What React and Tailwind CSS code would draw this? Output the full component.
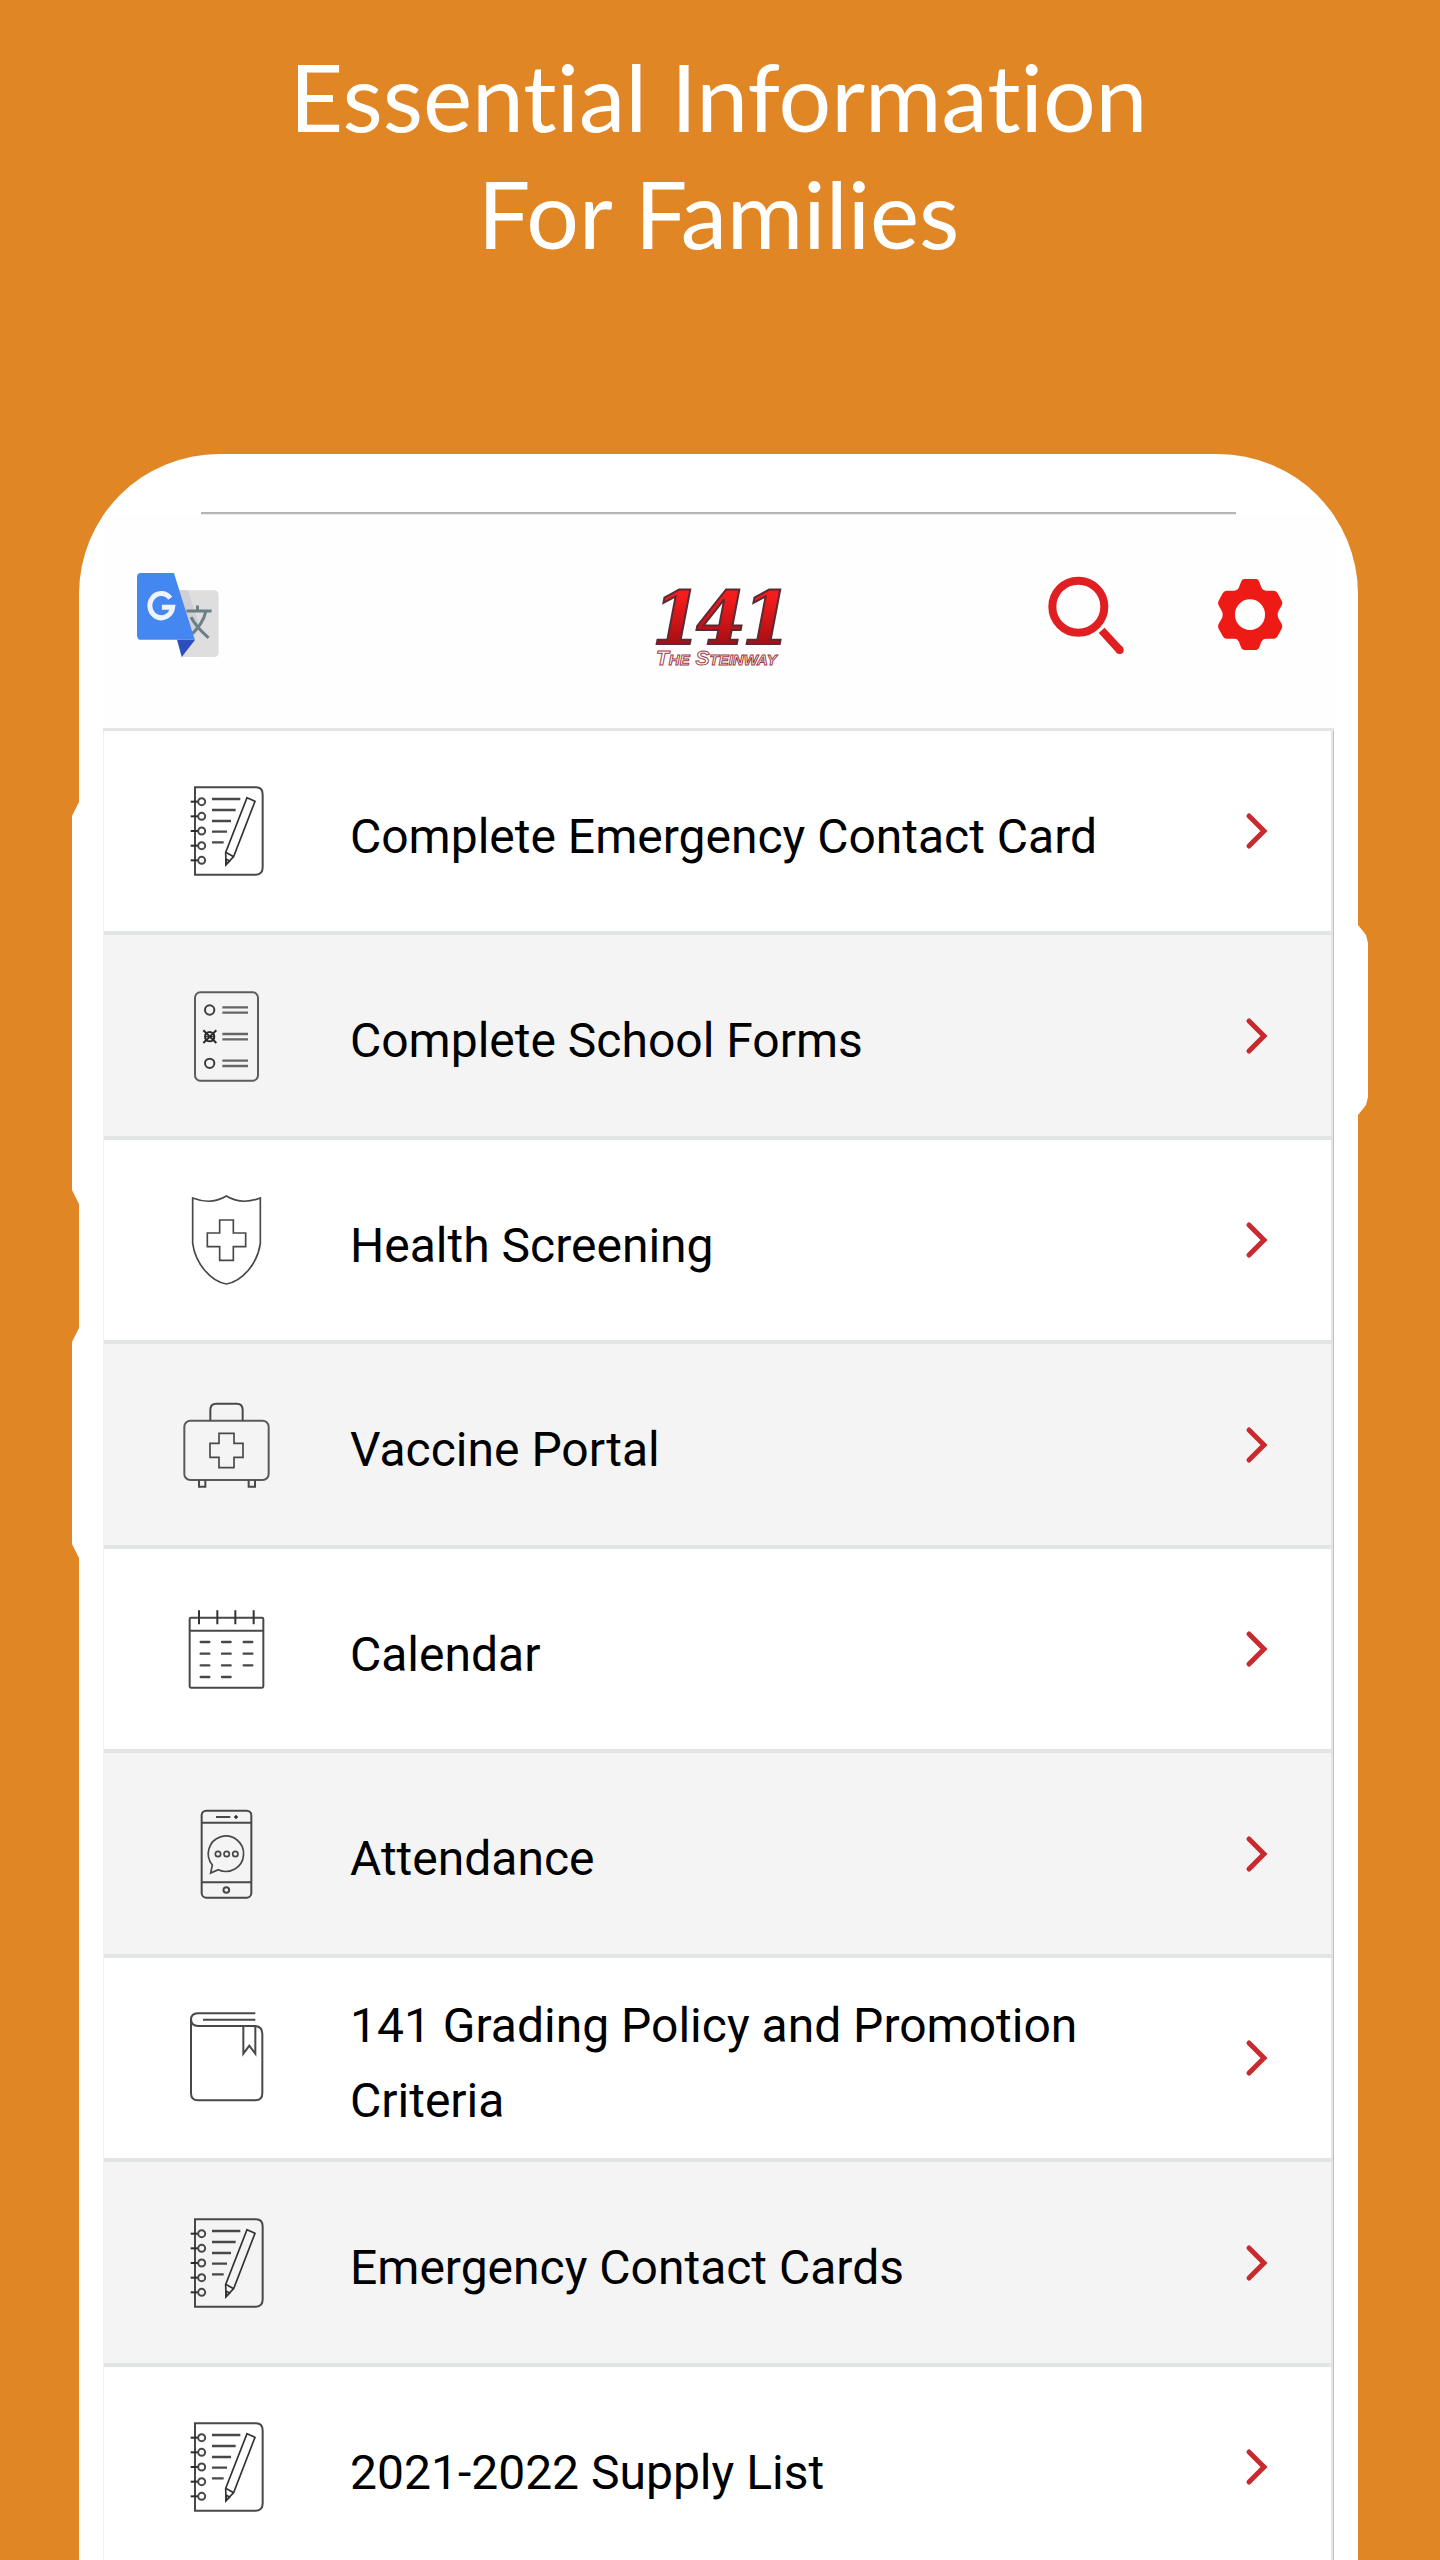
import React from "react";

function Icon({ viewBox, children }) {
  return (
    <svg
      viewBox={viewBox}
      className="h-[120px] w-[110px] shrink-0"
      fill="none"
      stroke="#484848"
      strokeWidth="6"
      aria-hidden="true"
    >
      {children}
    </svg>
  );
}

function NotebookIcon() {
  return (
    <Icon viewBox="0 3 330 360">
      <path d="M75 52H258Q278 52 278 74V292Q278 314 258 314H75Z" />
      {[95, 139, 183, 227, 271].map((y) => (
        <g key={y}>
          <path d={`M62 ${y}H84`} stroke="#2b2b2b" />
          <circle cx="95" cy={y} r="10.5" />
        </g>
      ))}
      <path d="M126 87H211M126 120H197M126 153H183M126 185H171M126 217H161" strokeWidth="7" />
      <path d="M231 83L255 94L191 260L168 284L167 247Z" stroke="#333" strokeWidth="5" />
      <path d="M167 247L191 260M168 284L169 268L179 273Z" stroke="#333" strokeWidth="5" />
    </Icon>
  );
}

function FormIcon() {
  return (
    <Icon viewBox="0 0 330 360">
      <rect x="75" y="49" width="189" height="265" rx="16" stroke="#5c5c5c" />
      <circle cx="119" cy="102" r="14" stroke="#3d3d3d" />
      <circle cx="119" cy="262" r="14" stroke="#3d3d3d" />
      <g stroke="#2b2b2b">
        <circle cx="119" cy="182" r="14" />
        <path d="M100 163L139 201M139 163L100 201" />
        <path d="M107 170V194M131 170V194M107 182H131" strokeWidth="3" />
      </g>
      <path
        d="M157 94H234M157 110H234M157 174H234M157 190H234M157 254H234M157 270H234"
        stroke="#666"
        strokeWidth="7"
      />
    </Icon>
  );
}

function ShieldIcon() {
  return (
    <Icon viewBox="0 0 330 360">
      <path d="M68 54Q124 76 169 48Q215 76 271 54V190C263 250 217 304 169 312C122 304 76 250 68 190Z" strokeWidth="5" />
      <path d="M149 120H190V159H227V200H190V241H149V200H112V159H149Z" strokeWidth="5" />
    </Icon>
  );
}

function FirstAidIcon() {
  return (
    <Icon viewBox="0 613 330 360">
      <rect x="43" y="720" width="253" height="178" rx="18" stroke="#5a5a5a" />
      <path d="M121 720V688Q121 669 139 669H200Q218 669 218 688V720" />
      <path d="M87 898V918H106V898M236 898V918H255V898" />
      <path d="M147 758H192V788H219V830H192V861H147V830H120V788H147Z" strokeWidth="5" />
    </Icon>
  );
}

function CalendarIcon() {
  return (
    <Icon viewBox="0 -3 330 360">
      <rect x="59" y="83" width="221" height="210" rx="4" />
      <path d="M59 122H280" />
      <path d="M87 61V103M142 61V103M196 61V103M251 61V103" stroke="#333" />
      <path
        d="M92 156H118M156 156H182M221 156H247M92 191H118M156 191H182M221 191H247M92 226H118M156 226H182M221 226H247M92 261H118M156 261H182"
        strokeWidth="7"
        strokeLinecap="round"
      />
    </Icon>
  );
}

function PhoneIcon() {
  return (
    <Icon viewBox="0 610 330 360">
      <rect x="95" y="660" width="149" height="261" rx="14" />
      <path d="M95 696H244M95 875H244M138 679H181" />
      <circle cx="198" cy="679" r="4" fill="#333" stroke="#333" strokeWidth="3" />
      <circle cx="169" cy="898" r="8.5" />
      <path d="M127 823A53 53 0 1 1 145 837L122 847Z" strokeWidth="5" />
      <g strokeWidth="5">
        <circle cx="144" cy="790" r="8" />
        <circle cx="170" cy="790" r="8" />
        <circle cx="196" cy="790" r="8" />
      </g>
    </Icon>
  );
}

function BookIcon() {
  return (
    <Icon viewBox="0 24 330 360">
      <path d="M256 70H83Q63 71 63 89Q64 107 84 108H256Q277 110 277 132V310Q277 331 256 331H84Q63 331 63 310V89" />
      <path d="M99 89H256" />
      <path d="M220 108V191L238 167L256 191V108" />
    </Icon>
  );
}

function TranslateIcon() {
  return (
    <svg viewBox="50 66 250 256" className="h-[86px] w-[84px]" aria-hidden="true">
      <path d="M165 120H282Q296 120 296 134V305Q296 319 282 319H186Z" fill="#dedede" />
      <path d="M180 120L226 268L186 319L240 230L205 120Z" fill="#cfcfd4" />
      <path d="M200 182H275M233 166V182M258 182C252 216 230 240 204 262M214 200C226 226 246 244 266 262" fill="none" stroke="#6b7f86" strokeWidth="9" />
      <path d="M172 268H226L186 319Z" fill="#2c4fbd" />
      <path d="M64 69H163L225 268H66Q53 268 53 254V82Q53 69 64 69Z" fill="#4587f0" />
      <path d="M152 144A34 36 0 1 0 159 171H127" fill="none" stroke="#eef4ff" strokeWidth="15" />
    </svg>
  );
}

function SchoolLogo() {
  return (
    <svg viewBox="0 0 132 82" className="h-[82px] w-[132px] overflow-visible" role="img" aria-label="141 The Steinway">
      <defs>
        <linearGradient id="logoRed" x1="0" y1="0" x2="0" y2="1">
          <stop offset="0.25" stopColor="#f51c1c" />
          <stop offset="0.8" stopColor="#a80d12" />
        </linearGradient>
      </defs>
      <text
        x="0 44 90"
        y="58"
        fontFamily="'DejaVu Serif', serif"
        fontWeight="700"
        fontStyle="italic"
        fontSize="72"
        fill="url(#logoRed)"
        stroke="#5b2a35"
        strokeWidth="2"
      >
        141
      </text>
      <text
        x="4"
        y="79"
        fontFamily="'Liberation Sans', sans-serif"
        fontWeight="700"
        fontStyle="italic"
        fontSize="21"
        fill="#fff"
        stroke="#a33a44"
        strokeWidth="1"
        style={{ fontVariant: "small-caps" }}
      >
        The Steinway
      </text>
    </svg>
  );
}

function SearchIcon() {
  return (
    <svg viewBox="54 45 234 243" className="h-[81px] w-[78px]" fill="none" stroke="#e01f22" aria-hidden="true">
      <circle cx="148" cy="143" r="78" strokeWidth="24" />
      <path d="M218 214L272 273" strokeWidth="24" />
      <circle cx="272" cy="273" r="12" fill="#e01f22" stroke="none" />
    </svg>
  );
}

function GearIcon() {
  return (
    <svg viewBox="564 54 198 219" className="h-[73px] w-[66px]" aria-hidden="true">
      <path
        fillRule="evenodd"
        fill="#ee1a15"
        d="M645 57H682Q688 57 691 66L697 82Q701 92 711 92H735Q742 92 746 100L758 122Q762 130 757 138L749 152Q743 164 749 176L757 190Q762 198 758 206L746 228Q742 236 735 236H711Q701 236 697 246L691 262Q688 270 682 270H645Q639 270 636 262L630 246Q626 236 616 236H592Q585 236 581 228L569 206Q565 198 570 190L578 176Q584 164 578 152L570 138Q565 130 569 122L581 100Q585 92 592 92H616Q626 92 630 82L636 66Q639 57 645 57ZM663 118A45 46 0 1 0 663 210A45 46 0 1 0 663 118Z"
      />
    </svg>
  );
}

function Chevron() {
  return (
    <svg viewBox="0 0 24 40" className="h-10 w-6 shrink-0" fill="none" stroke="#c92a2d" strokeWidth="5" strokeLinecap="round" aria-hidden="true">
      <path d="M5 5L20 20L5 35" />
    </svg>
  );
}

const items = [
  ["Complete Emergency Contact Card", NotebookIcon],
  ["Complete School Forms", FormIcon],
  ["Health Screening", ShieldIcon],
  ["Vaccine Portal", FirstAidIcon],
  ["Calendar", CalendarIcon],
  ["Attendance", PhoneIcon],
  ["141 Grading Policy and Promotion Criteria", BookIcon],
  ["Emergency Contact Cards", NotebookIcon],
  ["2021-2022 Supply List", NotebookIcon],
];

const leftEdge =
  "absolute right-full w-[7px] bg-white [clip-path:polygon(100%_0,0_14px,0_calc(100%-14px),100%_100%)] ";
const rightEdge =
  "absolute left-full w-[10px] bg-white [clip-path:polygon(0_0,80%_10px,100%_18px,100%_calc(100%-18px),80%_calc(100%-10px),0_100%)] ";

export default function App() {
  return (
    <div className="flex h-screen flex-col overflow-hidden bg-[#e08625] pr-[82px] pl-[79px]">
      <h1 className="pt-[38px] pb-[182px] text-center font-['Lato',sans-serif] text-[93px] leading-[117px] font-normal text-white [font-variant-ligatures:none]">
        Essential Information
        <br />
        For Families
      </h1>
      <div className="relative grow rounded-t-[140px] bg-white px-6 pt-[58px]">
        <span className={leftEdge + "top-[348px] h-[402px]"} />
        <span className={leftEdge + "top-[874px] h-[230px]"} />
        <span className={rightEdge + "top-[471px] h-[190px]"} />
        <div className="mx-[98px] h-[3px] border-t-2 border-[#b5b5b5] bg-[#eeeeee]" />
        <header className="grid h-[216px] grid-cols-3 items-center border-b-[3px] border-[#e4e4e4] bg-[#fefefe] px-[33px] pb-3.5">
          <button type="button" aria-label="Translate" className="justify-self-start">
            <TranslateIcon />
          </button>
          <div className="mt-6 justify-self-center">
            <SchoolLogo />
          </div>
          <div className="mr-[18px] flex items-center gap-[92px] justify-self-end">
            <button type="button" aria-label="Search">
              <SearchIcon />
            </button>
            <button type="button" aria-label="Settings">
              <GearIcon />
            </button>
          </div>
        </header>
        <ul className="border-r border-l border-r-[#e3b888] border-l-[#f0f0f0]">
          {items.map(([label, Glyph]) => (
            <li
              key={label}
              className="h-[204px] border-b-4 border-[#e1e5e6] bg-white even:h-[205px] even:bg-[#f4f4f4]"
            >
              <a href="#" className="flex h-full items-center border-r-2 border-[#e8e6e4] pr-[63px] pl-[66px]">
                <Glyph />
                <span className="grow pt-[10px] pr-20 pl-[70px] font-['Roboto',sans-serif] text-[48px] leading-[75px] text-black">
                  {label}
                </span>
                <Chevron />
              </a>
            </li>
          ))}
        </ul>
      </div>
    </div>
  );
}
